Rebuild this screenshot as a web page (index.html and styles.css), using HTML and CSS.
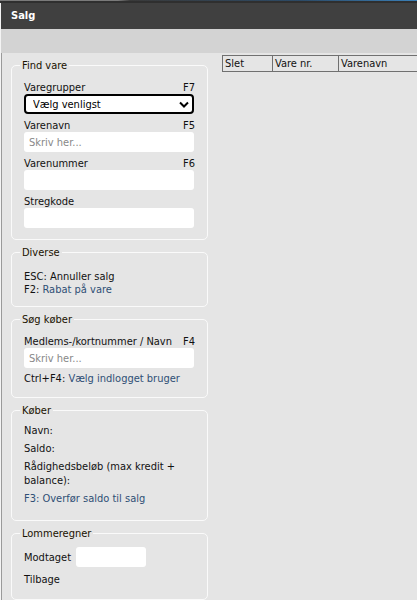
FILE: index.html
```html
<!DOCTYPE html>
<html lang="da">
<head>
<meta charset="utf-8">
<title>Salg</title>
<link rel="stylesheet" href="styles.css">
</head>
<body>
<div class="topline"></div>
<div class="page">
  <div class="header">Salg</div>
  <div class="subbar"></div>
  <div class="main">
    <div class="side">
      <fieldset class="box box-find">
        <legend>Find vare</legend>
        <div class="field">
          <div class="label"><span>Varegrupper</span><span>F7</span></div>
          <div class="select-wrap">
            <select class="select"><option>Vælg venligst</option></select>
            <svg class="chev" width="10" height="7" viewBox="0 0 10 7"><path d="M1 1.5 L5 5.5 L9 1.5" fill="none" stroke="#000" stroke-width="2"/></svg>
          </div>
        </div>
        <div class="field">
          <div class="label"><span>Varenavn</span><span>F5</span></div>
          <input class="input" type="text" placeholder="Skriv her...">
        </div>
        <div class="field">
          <div class="label"><span>Varenummer</span><span>F6</span></div>
          <input class="input" type="text">
        </div>
        <div class="field">
          <div class="label"><span>Stregkode</span></div>
          <input class="input" type="text">
        </div>
      </fieldset>

      <fieldset class="box box-div">
        <legend>Diverse</legend>
        <div class="line">ESC: Annuller salg</div>
        <div class="line">F2: <span class="link">Rabat på vare</span></div>
      </fieldset>

      <fieldset class="box box-sog">
        <legend>Søg køber</legend>
        <div class="field">
          <div class="label"><span>Medlems-/kortnummer / Navn</span><span>F4</span></div>
          <input class="input" type="text" placeholder="Skriv her...">
        </div>
        <div class="line">Ctrl+F4: <span class="link">Vælg indlogget bruger</span></div>
      </fieldset>

      <fieldset class="box box-kob">
        <legend>Køber</legend>
        <div class="para">Navn:</div>
        <div class="para">Saldo:</div>
        <div class="para">Rådighedsbeløb (max kredit + balance):</div>
        <div class="para link">F3: Overfør saldo til salg</div>
      </fieldset>

      <fieldset class="box box-lom">
        <legend>Lommeregner</legend>
        <div class="calc-row"><span>Modtaget</span><input class="input small" type="text"></div>
        <div class="calc-row"><span>Tilbage</span></div>
      </fieldset>
    </div>
    <div class="content">
      <table class="grid">
        <thead>
          <tr><th class="c1">Slet</th><th class="c2">Vare nr.</th><th class="c3">Varenavn</th></tr>
        </thead>
      </table>
    </div>
  </div>
</div>
</body>
</html>
```
FILE: styles.css
```css
html, body {
  margin: 0;
  padding: 0;
  background: #e5e5e5;
  overflow: hidden;
}
body {
  font-family: "DejaVu Sans Condensed", "DejaVu Sans", sans-serif;
  font-stretch: condensed;
  font-size: 11px;
  color: #111;
  width: 417px;
  height: 600px;
}
.topline {
  height: 1px;
  background: linear-gradient(to right, #7a7a7a 0, #7a7a7a 118px, #3a3a3a 130px, #2c4a66 300px, #3b80b8 417px);
  border-bottom: 2px solid #2f2f2f;
}
.page {
  border-left: 1px solid #f4f4f4;
  box-shadow: inset 1px 0 0 #9a9a9a;
  height: 597px;
}
.header {
  height: 26px;
  background: #404040;
  color: #fff;
  font-weight: bold;
  font-size: 11px;
  line-height: 26px;
  padding-left: 10px;
}
.subbar {
  height: 24px;
  background: #d3d3d3;
}
.main {
  display: flex;
  padding-top: 2px;
}
.side {
  width: 221px;
  flex: none;
  padding-left: 10px;
  padding-top: 4px;
  box-sizing: border-box;
}
.box {
  width: 197px;
  box-sizing: border-box;
  margin: 0 0 6px 0;
  border: 1px solid #fafafa;
  border-radius: 5px;
  padding: 0 12px 10px 12px;
  min-width: 0;
}
.box legend {
  padding: 0 2px;
  margin-left: -4px;
  line-height: 13px;
  color: #1a1200;
}
.box-find { padding-top: 9px; padding-bottom: 11px; }
.box-find .field + .field { margin-top: 5px; }
.label {
  display: flex;
  justify-content: space-between;
  line-height: 13px;
}
.input {
  display: block;
  width: 170px;
  height: 20px;
  box-sizing: border-box;
  border: none;
  border-radius: 3px;
  background: #fff;
  font-family: inherit;
  font-stretch: condensed;
  font-size: 11px;
  padding: 0 0 0 5px;
  margin: 0;
  outline: none;
}
.input::placeholder { color: #888; }
.select-wrap {
  position: relative;
  width: 170px;
  height: 20px;
}
.select {
  appearance: none;
  -webkit-appearance: none;
  width: 170px;
  height: 20px;
  box-sizing: border-box;
  border: 2px solid #000;
  border-radius: 4px;
  background: #fff;
  font-family: inherit;
  font-stretch: condensed;
  font-size: 11px;
  color: #000;
  padding: 0 0 0 7px;
  margin: 0;
}
.chev {
  position: absolute;
  right: 5px;
  top: 7px;
}
.line { line-height: 13px; }
.link { color: #2f4f75; }
.box-div { padding-top: 11px; padding-bottom: 10px; }
.box-sog { padding-top: 9px; padding-bottom: 12px; }
.box-sog .line { margin-top: 4px; }
.box-kob { padding-top: 7px; padding-bottom: 14px; }
.para { line-height: 14px; margin-bottom: 4px; }
.para:last-child { margin-bottom: 0; }
.box-lom { padding-top: 7px; padding-bottom: 10px; }
.calc-row {
  display: flex;
  align-items: center;
  gap: 5px;
  min-height: 20px;
}
.calc-row + .calc-row { margin-top: 2px; }
.input.small { width: 70px; }
.content {
  flex: 1;
  min-width: 0;
}
.grid {
  border-collapse: collapse;
  width: 260px;
}
.grid th {
  border: 1px solid #707070;
  text-align: left;
  font-weight: normal;
  height: 15px;
  padding: 0 2px;
  line-height: 15px;
  font-size: 11px;
}
.grid .c1 { width: 45px; }
.grid .c2 { width: 61px; }
```
